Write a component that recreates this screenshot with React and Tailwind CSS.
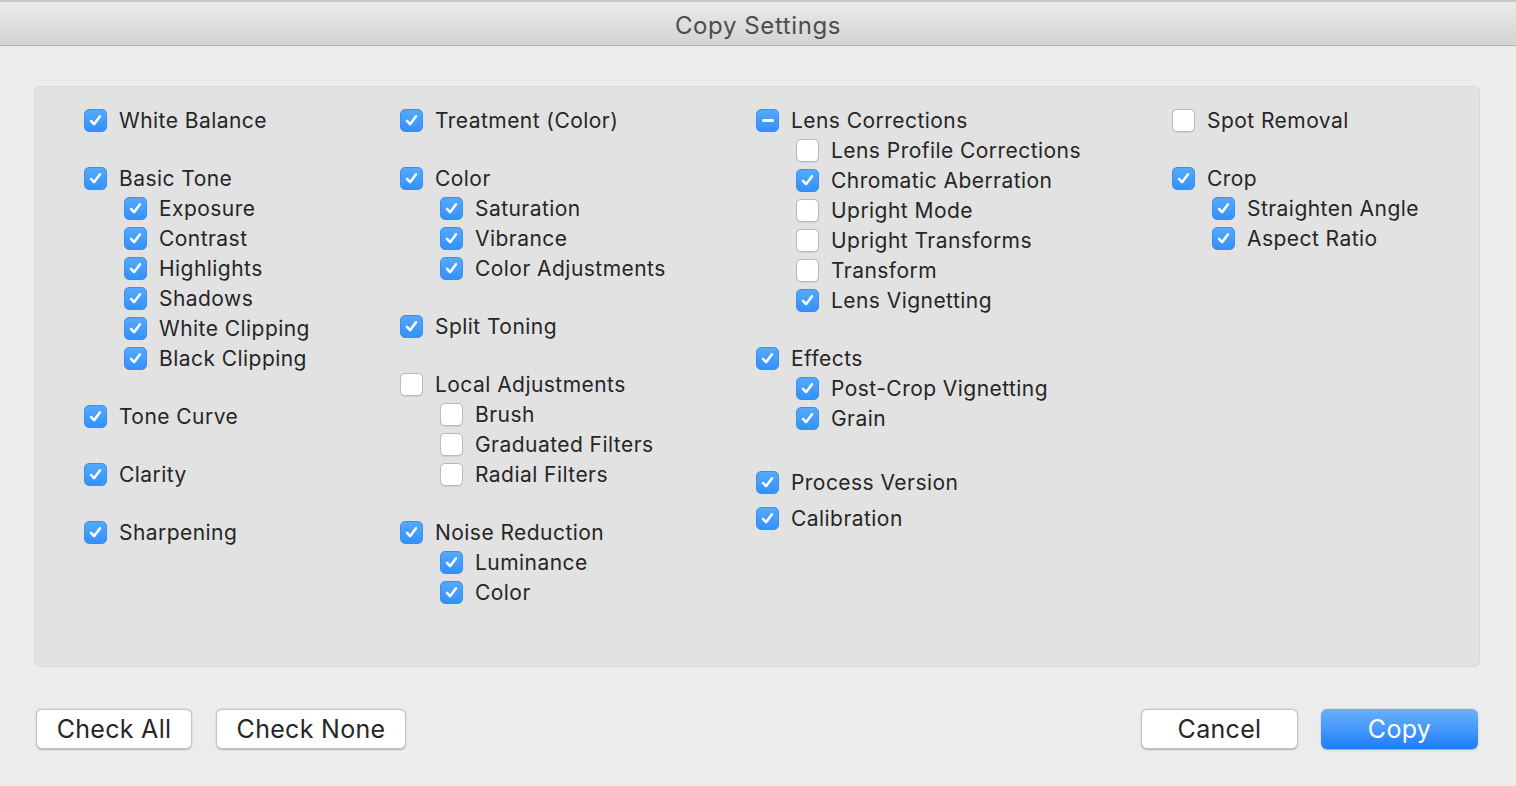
import React from "react";

function Box({ state }) {
  if (state === "off") {
    return (
      <span className="w-[23px] h-[23px] shrink-0 rounded-[5px] bg-white border border-[#b9b9b9] shadow-[0_0.5px_1px_rgba(0,0,0,0.08)]" />
    );
  }
  return (
    <span className="w-[23px] h-[23px] shrink-0 rounded-[5px] bg-gradient-to-b from-[#55a9fd] to-[#3391fb] border border-[#3a8ff0] flex items-center justify-center">
      {state === "on" ? (
        <svg width="15" height="15" viewBox="0 0 15 15">
          <path d="M3 7.8 L6.1 11.2 L12 3.2" fill="none" stroke="white" strokeWidth="2.5" strokeLinecap="round" strokeLinejoin="round" />
        </svg>
      ) : (
        <span className="w-[12px] h-[3px] rounded-full bg-white" />
      )}
    </span>
  );
}

function Item({ label, state = "on", sub = false, className = "" }) {
  return (
    <div className={`h-[30px] flex items-center gap-[12px] ${sub ? "pl-[40px]" : ""} ${className}`}>
      <Box state={state} />
      <span className="text-[21px] tracking-[0.45px] text-[#262626] whitespace-nowrap leading-none">{label}</span>
    </div>
  );
}

function Group({ children, className = "" }) {
  return <div className={`flex flex-col ${className}`}>{children}</div>;
}

function Btn({ children, primary, className = "" }) {
  return primary ? (
    <button className={`h-[40px] rounded-[6px] bg-gradient-to-b from-[#69b1fd] to-[#1a7cf9] text-white text-[25px] tracking-[0.3px] leading-none whitespace-nowrap shadow-[0_0.5px_1.5px_rgba(0,0,0,0.3)] ${className}`}>
      {children}
    </button>
  ) : (
    <button className={`h-[40px] rounded-[6px] bg-white border border-[#c4c4c4] text-[#262626] text-[25px] tracking-[0.3px] leading-none whitespace-nowrap shadow-[0_0.5px_1.5px_rgba(0,0,0,0.25)] ${className}`}>
      {children}
    </button>
  );
}

export default function App() {
  return (
    <div className="w-[1516px] h-[786px] bg-[#ececec] overflow-hidden flex flex-col" style={{ fontFamily: "Inter, 'Noto Sans', sans-serif" }}>
      <div className="h-[2px] bg-[#c9c9c9] shrink-0" />
      <div className="h-[44px] shrink-0 bg-gradient-to-b from-[#ebebeb] to-[#d3d3d3] border-b border-[#b3b3b3] rounded-tr-[5px] flex items-center justify-center pt-[5px]">
        <span className="text-[24px] tracking-[0.6px] text-[#4d4d4d] leading-none">Copy Settings</span>
      </div>
      <div className="pl-[34px] pr-[36px] pt-[40px]">
        <div className="h-[581px] rounded-[6px] bg-[#e2e2e2] border border-[#d8d8d8] pt-[18px] pl-[49px] flex">
          <div className="w-[316px] flex flex-col gap-[28px]">
            <Group><Item label="White Balance" /></Group>
            <Group>
              <Item label="Basic Tone" />
              <Item label="Exposure" sub />
              <Item label="Contrast" sub />
              <Item label="Highlights" sub />
              <Item label="Shadows" sub />
              <Item label="White Clipping" sub />
              <Item label="Black Clipping" sub />
            </Group>
            <Group><Item label="Tone Curve" /></Group>
            <Group><Item label="Clarity" /></Group>
            <Group><Item label="Sharpening" /></Group>
          </div>
          <div className="w-[356px] flex flex-col gap-[28px]">
            <Group><Item label="Treatment (Color)" /></Group>
            <Group>
              <Item label="Color" />
              <Item label="Saturation" sub />
              <Item label="Vibrance" sub />
              <Item label="Color Adjustments" sub />
            </Group>
            <Group><Item label="Split Toning" /></Group>
            <Group>
              <Item label="Local Adjustments" state="off" />
              <Item label="Brush" sub state="off" />
              <Item label="Graduated Filters" sub state="off" />
              <Item label="Radial Filters" sub state="off" />
            </Group>
            <Group>
              <Item label="Noise Reduction" />
              <Item label="Luminance" sub />
              <Item label="Color" sub />
            </Group>
          </div>
          <div className="w-[416px] flex flex-col">
            <Group>
              <Item label="Lens Corrections" state="mixed" />
              <Item label="Lens Profile Corrections" sub state="off" />
              <Item label="Chromatic Aberration" sub />
              <Item label="Upright Mode" sub state="off" />
              <Item label="Upright Transforms" sub state="off" />
              <Item label="Transform" sub state="off" />
              <Item label="Lens Vignetting" sub />
            </Group>
            <Group className="mt-[28px]">
              <Item label="Effects" />
              <Item label="Post-Crop Vignetting" sub />
              <Item label="Grain" sub />
            </Group>
            <Group className="mt-[34px]"><Item label="Process Version" /></Group>
            <Group className="mt-[6px]"><Item label="Calibration" /></Group>
          </div>
          <div className="flex flex-col gap-[28px]">
            <Group><Item label="Spot Removal" state="off" /></Group>
            <Group>
              <Item label="Crop" />
              <Item label="Straighten Angle" sub />
              <Item label="Aspect Ratio" sub />
            </Group>
          </div>
        </div>
      </div>
      <div className="flex items-center pl-[36px] pr-[38px] mt-[42px]">
        <div className="flex gap-[24px]">
          <Btn className="w-[156px]">Check All</Btn>
          <Btn className="w-[190px]">Check None</Btn>
        </div>
        <div className="flex-1" />
        <div className="flex gap-[23px]">
          <Btn className="w-[157px]">Cancel</Btn>
          <Btn primary className="w-[157px]">Copy</Btn>
        </div>
      </div>
    </div>
  );
}
